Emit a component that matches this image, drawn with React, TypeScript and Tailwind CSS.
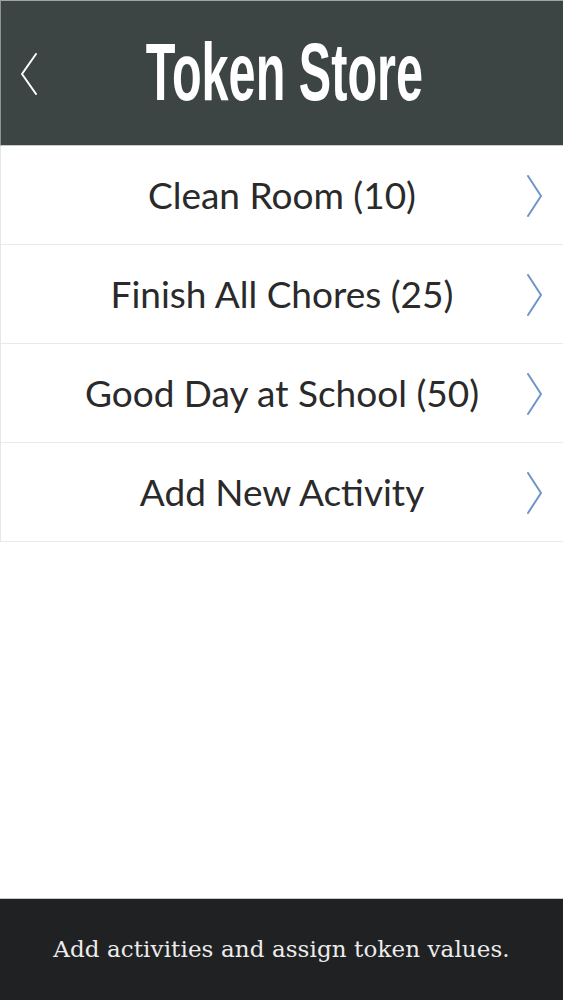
import React from "react";

const items = [
  "Clean Room (10)",
  "Finish All Chores (25)",
  "Good Day at School (50)",
  "Add New Activity",
];

function Chevron() {
  return (
    <svg width="18" height="42" viewBox="0 0 18 42" className="shrink-0">
      <path d="M2 1 L15 21 L2 41" fill="none" stroke="#6f94c9" strokeWidth="2" strokeLinecap="round" strokeLinejoin="round" />
    </svg>
  );
}

export default function App() {
  return (
    <div className="flex h-[1000px] w-[563px] flex-col overflow-hidden bg-white">
      <header className="relative flex h-[146px] shrink-0 items-center justify-center border-t border-l border-b border-t-[#9ea3a3] border-l-[#8f9595] border-b-[#c9cccc] bg-[#3d4544]">
        <button className="absolute left-[19px] top-[52px]">
          <svg width="18" height="42" viewBox="0 0 18 42">
            <path d="M16 1 L2 21 L16 41" fill="none" stroke="#ffffff" strokeWidth="2" strokeLinecap="round" strokeLinejoin="round" />
          </svg>
        </button>
        <h1 className="inline-block origin-center scale-x-[0.6] pb-[2px] pl-[8px] font-['Liberation_Sans',sans-serif] text-[81px] font-bold leading-none text-white">
          Token Store
        </h1>
      </header>

      <ul className="flex flex-col border-l border-[#e6e8e8]">
        {items.map((t) => (
          <li key={t} className="relative flex h-[99px] items-center justify-center border-b border-[#e9ebeb]">
            <span className="font-['Lato',sans-serif] text-[37px] text-[#2a2a2a]">{t}</span>
            <span className="absolute right-[19px] top-[29px]">
              <Chevron />
            </span>
          </li>
        ))}
      </ul>

      <div className="flex-1" />

      <footer className="flex h-[102px] shrink-0 items-center justify-center border-t border-[#c8c8c8] bg-[#202123]">
        <p className="font-['DejaVu_Serif',serif] text-[23px] tracking-[0.1px] text-[#ececec]">
          Add activities and assign token values.
        </p>
      </footer>
    </div>
  );
}
